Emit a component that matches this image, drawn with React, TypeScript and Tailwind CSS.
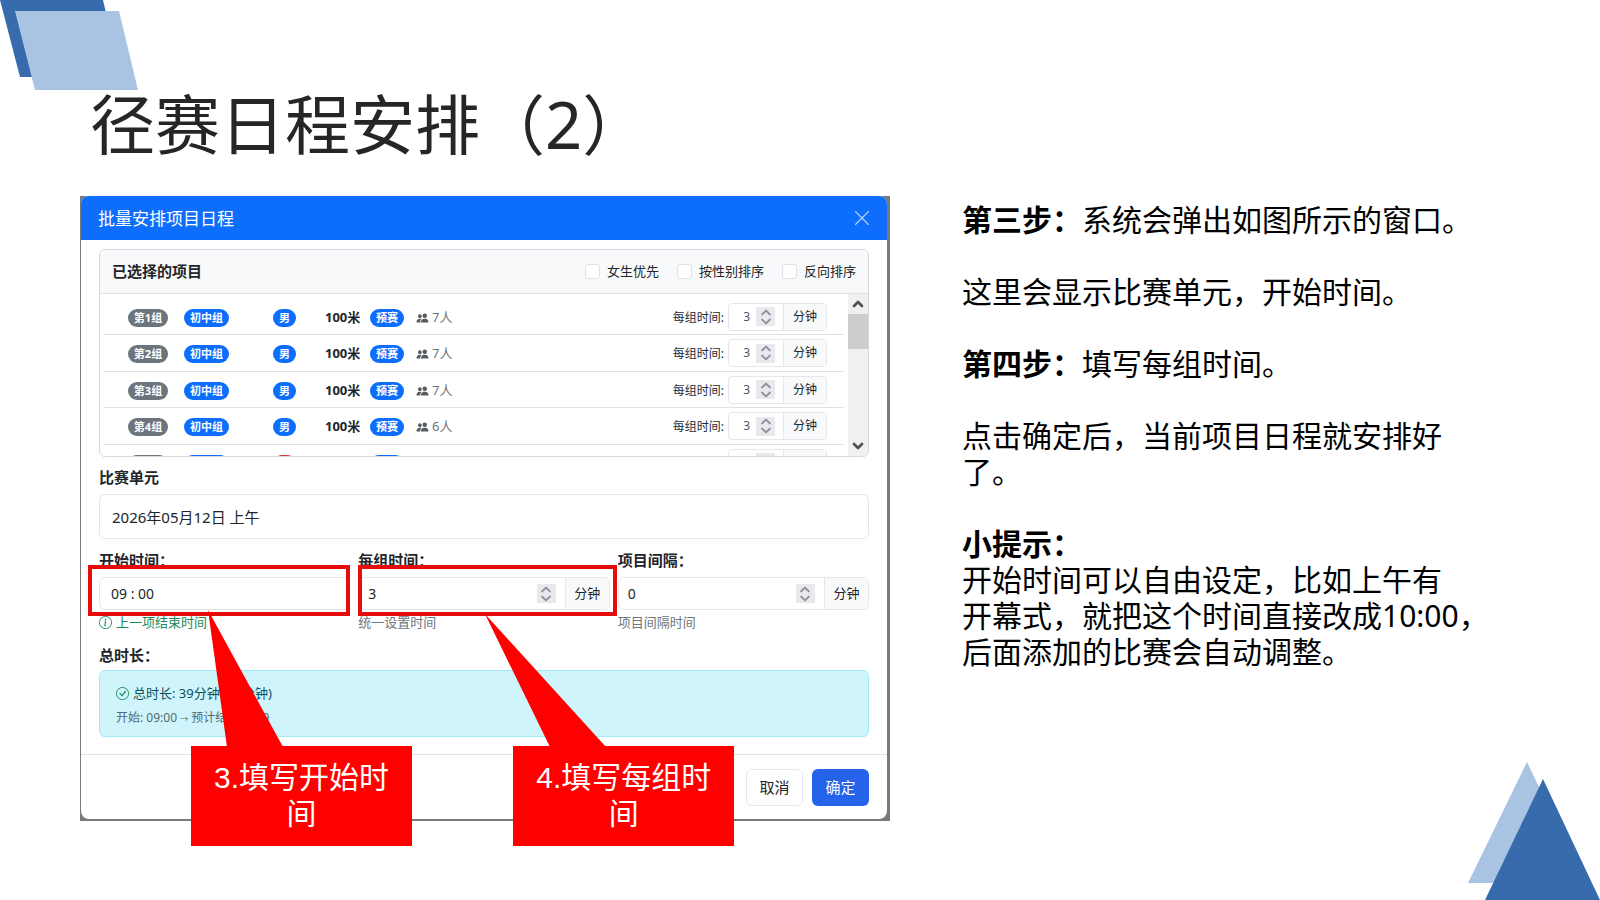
import { FC, ReactNode } from "react";
import { ChevronDown, ChevronUp, X } from "lucide-react";
import { BsCheckCircle, BsInfoCircle, BsPeopleFill } from "react-icons/bs";

type Row = { id: number; gender: "男" | "女"; count: number };

const rows: Row[] = [
  { id: 1, gender: "男", count: 7 },
  { id: 2, gender: "男", count: 7 },
  { id: 3, gender: "男", count: 7 },
  { id: 4, gender: "男", count: 6 },
  { id: 5, gender: "女", count: 6 },
];

const sortOptions = ["女生优先", "按性别排序", "反向排序"];

const Spinner: FC = () => (
  <span className="flex h-[19px] w-[19px] shrink-0 flex-col items-center justify-center bg-[#e9e9ed] text-[#8f8f9d]">
    <ChevronUp className="h-[9px] w-4" viewBox="0 5 24 14" strokeWidth={3} />
    <ChevronDown className="h-[9px] w-4" viewBox="0 5 24 14" strokeWidth={3} />
  </span>
);

const Badge: FC<{ color: string; children: ReactNode }> = ({ color, children }) => (
  <span
    className={`block rounded-full px-1.5 text-[11px] leading-[18px] font-bold whitespace-nowrap text-white ${color}`}
  >
    {children}
  </span>
);

const EventRow: FC<{ row: Row }> = ({ row }) => (
  <li className="flex h-9 items-center border-b border-[#dee2e6] pt-0.5 even:h-[37px]">
    <div className="flex w-20 justify-center pl-2">
      <Badge color="bg-[#6c757d]">第{row.id}组</Badge>
    </div>
    <div className="flex w-[89px]">
      <Badge color="bg-[#0d6efd]">初中组</Badge>
    </div>
    <div className="flex w-[52px]">
      <Badge color={row.gender === "男" ? "bg-[#0d6efd]" : "bg-[#dc3545]"}>{row.gender}</Badge>
    </div>
    <strong className="w-[45px] text-[13px]">100米</strong>
    <Badge color="bg-[#0d6efd]">预赛</Badge>
    <span className="ml-3 flex items-center gap-[3px] text-[13px] text-[#6c757d]">
      <BsPeopleFill className="h-3 w-[13px] text-[#555b60]" />
      {row.count}人
    </span>
    <label htmlFor={`time-${row.id}`} className="ml-auto text-xs text-[#1f2937]">
      每组时间:
    </label>
    <div className="mr-[17px] mb-0.5 ml-1 flex h-7 overflow-hidden rounded border border-[#e5e7eb]">
      <div className="flex w-[54px] items-center pr-2">
        <input
          id={`time-${row.id}`}
          className="w-full min-w-0 pr-1.5 text-right text-xs text-[#4b5563]"
          defaultValue={3}
        />
        <Spinner />
      </div>
      <span className="flex w-[43px] items-center justify-center border-l border-[#e5e7eb] bg-[#f8f9fa] text-xs">
        分钟
      </span>
    </div>
  </li>
);

// Red frame round a field, with a speech box that hangs below it
const Callout: FC<{ frame: string; box: string; points: string; children: ReactNode }> = ({
  frame,
  box,
  points,
  children,
}) => (
  <div className={`pointer-events-none absolute z-10 h-[51px] border-4 border-[#e60c0c] ${frame}`}>
    <svg className="absolute top-0 left-0 h-[178px] w-[250px]" viewBox="0 0 250 178">
      <polygon points={points} fill="#ff0000" />
    </svg>
    <p
      className={`absolute top-[177px] w-[221px] bg-[#ff0000] px-2.5 py-3.5 text-center font-['Liberation_Sans','Noto_Sans_CJK_SC',sans-serif] text-[30px] leading-9 text-white ${box}`}
    >
      {children}
    </p>
  </div>
);

const NumberField: FC<{ id: string; label: string; value: number; hint: string; children?: ReactNode }> = ({
  id,
  label,
  value,
  hint,
  children,
}) => (
  <div>
    <label htmlFor={id} className="block text-[15px] leading-5 font-bold">
      {label}
    </label>
    <div className="relative mt-[7px]">
      <div className="flex h-[33px] overflow-hidden rounded-md border border-[#e5e7eb]">
        <div className="flex min-w-0 flex-1 items-center px-[9px]">
          <input id={id} className="w-full min-w-0 text-sm" defaultValue={value} />
          <Spinner />
        </div>
        <span className="flex w-[44px] items-center justify-center border-l border-[#e5e7eb] bg-[#f8f9fa] text-[13px]">
          分钟
        </span>
      </div>
      {children}
    </div>
    <p className="mt-0.5 text-[13px] leading-5 text-[#6c757d]">{hint}</p>
  </div>
);

const ScheduleDialog: FC = () => (
  <section className="bg-[#767a7a] pr-[3px] pb-0.5 pl-px text-[#212529]">
    <div className="rounded-lg bg-white">
      <div className="flex h-11 items-center justify-between rounded-t-lg bg-[#0d6efd] pr-3 pl-[17px] text-white">
        <h2 className="pt-0.5 text-[17px]">批量安排项目日程</h2>
        <button type="button" aria-label="关闭">
          <X className="h-[26px] w-[26px] text-[#b9d4ff]" strokeWidth={1} />
        </button>
      </div>

      <div className="px-[18px] pt-[9px]">
        <div className="overflow-hidden rounded-md border border-[#d5d8dc]">
          <div className="flex h-11 items-center border-b border-[#dee2e6] bg-[#f8f9fa] pr-3 pl-3">
            <h3 className="mr-auto text-[15px] font-bold">已选择的项目</h3>
            <div className="flex gap-[18px]">
              {sortOptions.map((option) => (
                <label key={option} className="flex items-center gap-[7px] text-[13px]">
                  <input
                    type="checkbox"
                    className="h-[15px] w-[15px] appearance-none rounded-[3px] border border-[#dee2e6] bg-white"
                  />
                  {option}
                </label>
              ))}
            </div>
          </div>
          <div className="flex h-[162px] overflow-hidden">
            <ul className="h-fit flex-1 px-1 pt-[5px]">
              {rows.map((row) => (
                <EventRow key={row.id} row={row} />
              ))}
            </ul>
            <div className="flex w-5 flex-col items-center bg-[#f0f0f0] text-[#505050]">
              <ChevronUp className="h-5 w-4" strokeWidth={4} />
              <div className="h-[35px] w-full bg-[#cdcdcd]" />
              <ChevronDown className="mt-auto h-5 w-4" strokeWidth={4} />
            </div>
          </div>
        </div>

        <label htmlFor="unit" className="mt-2.5 block text-[15px] leading-5 font-bold">
          比赛单元
        </label>
        <input
          id="unit"
          className="mt-[7px] block h-[45px] w-full rounded-md border border-[#e5e7eb] px-3 text-[15px]"
          defaultValue="2026年05月12日 上午"
        />

        <div className="mt-[11px] grid grid-cols-3 gap-2">
          <div>
            <label htmlFor="start" className="block text-[15px] leading-5 font-bold">
              开始时间：
            </label>
            <div className="relative mt-[7px]">
              <input
                id="start"
                className="block h-[33px] w-full rounded-md border border-[#e5e7eb] px-[11px] text-sm"
                defaultValue="09 : 00"
              />
              <Callout
                frame="-top-3 -left-[11px] right-0"
                box="left-[99px]"
                points="116,41 135,178 191,178"
              >
                3.填写开始时间
              </Callout>
            </div>
            <p className="mt-0.5 flex items-center gap-1 text-[13px] leading-5 text-[#198754]">
              <BsInfoCircle className="h-[13px] w-[13px]" />
              上一项结束时间
            </p>
          </div>
          <NumberField id="per-group" label="每组时间：" value={3} hint="统一设置时间">
            <Callout
              frame="-top-3 left-0 -right-[7px]"
              box="left-[151px]"
              points="123,45 188,178 244,178"
            >
              4.填写每组时间
            </Callout>
          </NumberField>
          <NumberField id="interval" label="项目间隔：" value={0} hint="项目间隔时间" />
        </div>

        <h3 className="mt-[13px] text-[15px] leading-5 font-bold">总时长：</h3>
        <div className="mt-[5px] h-[67px] rounded-md border border-[#9eeaf9] bg-[#cff4fc] px-4 pt-3 text-[#055160]">
          <p className="flex items-center gap-1 text-[13px] leading-5">
            <BsCheckCircle className="h-[13px] w-[13px] text-[#198754]" />
            总时长: 39分钟 (39分钟)
          </p>
          <p className="mt-[5px] text-xs leading-5 text-[#4f6b72]">
            开始: 09:00 <span className="text-[8px]">→</span> 预计结束: 9:39
          </p>
        </div>
      </div>

      <div className="mt-[17px] flex justify-end gap-[9px] border-t border-[#dee2e6] px-[18px] pt-3.5 pb-[13px]">
        <button
          type="button"
          className="h-[37px] w-[57px] rounded-md border border-[#e5e7eb] bg-white text-[15px]"
        >
          取消
        </button>
        <button type="button" className="h-[37px] w-[57px] rounded-md bg-[#2563eb] text-[15px] text-white">
          确定
        </button>
      </div>
    </div>
  </section>
);

const Steps: FC = () => (
  <div className="space-y-9 pt-1.5 text-[30px] leading-9 text-black">
    <p>
      <strong>第三步：</strong>系统会弹出如图所示的窗口。
    </p>
    <p>这里会显示比赛单元，开始时间。</p>
    <p>
      <strong>第四步：</strong>填写每组时间。
    </p>
    <p>
      点击确定后，当前项目日程就安排好
      <br />
      了。
    </p>
    <p>
      <strong>小提示：</strong>
      <br />
      开始时间可以自由设定，比如上午有
      <br />
      开幕式，就把这个时间直接改成10:00，
      <br />
      后面添加的比赛会自动调整。
    </p>
  </div>
);

const App: FC = () => (
  <main
    lang="zh-CN"
    className="relative min-h-screen overflow-hidden bg-white font-['Noto_Sans','Noto_Sans_CJK_SC',sans-serif]"
  >
    <svg className="absolute top-0 left-0 h-[90px] w-[138px]" viewBox="0 0 138 90">
      <polygon points="0,0 103,0 121,77 20,77" fill="#376bab" />
      <polygon points="15,11 119,11 138,90 35,90" fill="#a9c3e2" />
    </svg>
    <svg className="absolute right-0 bottom-0 h-[138px] w-[132px]" viewBox="0 0 132 138">
      <polygon points="59,0 117,121 0,121" fill="#a9c3e2" />
      <polygon points="75,17 132,138 17,138" fill="#376bab" />
    </svg>

    <h1 className="px-[90px] pt-[84px] pb-8 text-[65px] leading-[80px] text-[#262626]">
      径赛日程安排（2）
    </h1>
    <div className="grid grid-cols-[810fr_528fr] items-start gap-[72px] pr-[110px] pl-20">
      <ScheduleDialog />
      <Steps />
    </div>
  </main>
);

export default App;
